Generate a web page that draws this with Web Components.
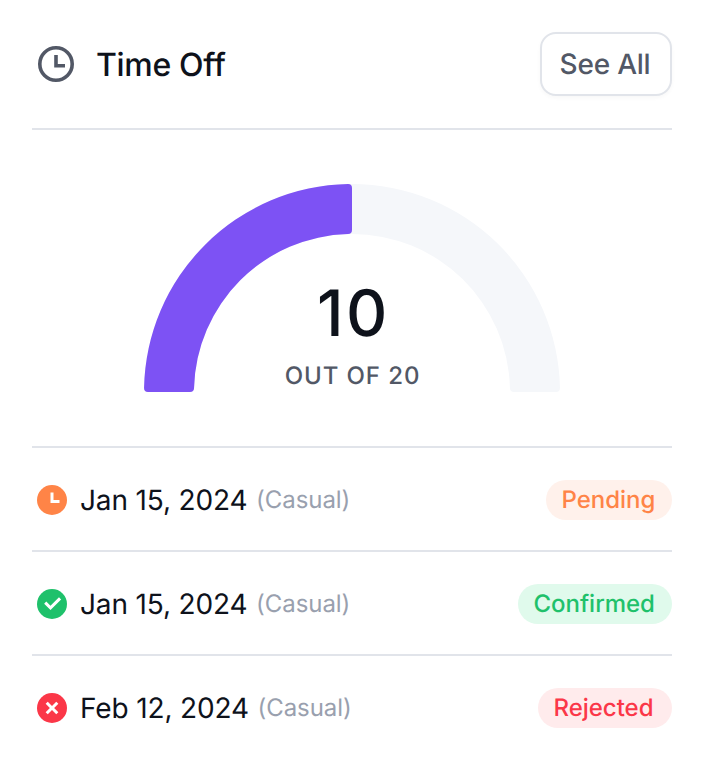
<!DOCTYPE html>
<html lang="en">
<head>
<meta charset="utf-8">
<title>Time Off</title>
<style>
  body { margin: 0; background: #fff; font-family: Inter, "Liberation Sans", sans-serif; text-rendering: geometricPrecision; }
</style>
</head>
<body>
<time-off-card>
  <outline-button slot="action">See All</outline-button>
  <half-gauge slot="gauge" value="10" total="20"></half-gauge>
  <leave-row status="pending" kind="(Casual)" label="Pending">Jan 15, 2024</leave-row>
  <leave-row status="confirmed" kind="(Casual)" label="Confirmed">Jan 15, 2024</leave-row>
  <leave-row status="rejected" kind="(Casual)" label="Rejected">Feb 12, 2024</leave-row>
</time-off-card>
<script>
const HANDS = 'M10.75 10H13.75V11.5H9.25V6.25H10.75Z';

const define = (name, render) => customElements.define(name, class extends HTMLElement {
  connectedCallback() {
    if (!this.shadowRoot) this.attachShadow({ mode: 'open' }).innerHTML = render(this);
  }
});

define('outline-button', () => `
  <style>
    :host { display: block; }
    button {
      display: block; box-sizing: border-box; height: 64px; width: 132px; padding: 0 2px 0 0;
      border: 2px solid #e1e4ea; border-radius: 16px; background: #fff;
      box-shadow: 0 2px 4px rgba(10, 13, 20, .03);
      font: 500 28px/40px Inter, "Liberation Sans", sans-serif; letter-spacing: -0.008em; color: #525866;
      text-rendering: geometricPrecision;
    }
  </style>
  <button type="button"><slot></slot></button>`);

// Ring segment between two fractions of the half circle, with softened corners.
function segment(from, to) {
  const cx = 208, cy = 208, R = 208, r = 158, c = 4;
  const a = Math.PI * (1 + from), b = Math.PI * (1 + to);
  const p = (rad, ang) => (cx + rad * Math.cos(ang)).toFixed(2) + ' ' + (cy + rad * Math.sin(ang)).toFixed(2);
  return `M${p(R - c, a)}Q${p(R, a)} ${p(R, a + c / R)}A${R} ${R} 0 0 1 ${p(R, b - c / R)}` +
    `Q${p(R, b)} ${p(R - c, b)}L${p(r + c, b)}Q${p(r, b)} ${p(r, b - c / r)}` +
    `A${r} ${r} 0 0 0 ${p(r, a + c / r)}Q${p(r, a)} ${p(r + c, a)}Z`;
}

define('half-gauge', el => {
  const value = el.getAttribute('value'), total = el.getAttribute('total');
  return `
  <style>
    :host { display: grid; width: 416px; height: 208px; }
    svg, .label { grid-area: 1 / 1; }
    .label { display: flex; flex-direction: column; align-items: center; align-self: end; }
    .value { padding-left: 3px; font-weight: 500; font-size: 64px; line-height: 80px; letter-spacing: 0.04em; color: #0e121b; }
    .total { margin-top: 6px; padding-left: 1px; font-weight: 500; font-size: 24px; line-height: 32px; letter-spacing: 0.038em; color: #525866; }
  </style>
  <svg width="416" height="208" viewBox="0 0 416 208">
    <path d="${segment(0, 1)}" fill="#f5f7fa"/>
    <path d="${segment(0, value / total)}" fill="#7d52f4"/>
  </svg>
  <div class="label"><div class="value">${value}</div><div class="total">OUT OF ${total}</div></div>`;
});

const STATUS = {
  pending: { color: '#ff8447', tint: '#fff1eb', width: 126, glyph: HANDS },
  confirmed: { color: '#1fc16b', tint: '#e0faec', width: 154, glyph: 'M9.252 13L14.555 7.697L13.494 6.636L9.252 10.879L7.13 8.757L6.07 9.818Z' },
  rejected: { color: '#fb3748', tint: '#ffebec', width: 134, glyph: 'M10 8.939L7.879 6.818L6.818 7.879L8.939 10L6.818 12.121L7.879 13.182L10 11.061L12.121 13.182L13.182 12.121L11.061 10L13.182 7.879L12.121 6.818Z' }
};

define('leave-row', el => {
  const s = STATUS[el.getAttribute('status')];
  return `
  <style>
    :host { display: flex; align-items: center; height: 40px; padding: 32px 0 30px; border-top: 2px solid #e1e4ea; }
    svg { flex: none; margin-right: 8px; }
    .date { font-size: 28px; line-height: 40px; letter-spacing: -0.005em; color: #0e121b; }
    .kind { margin-left: 8.5px; font-size: 24px; line-height: 32px; letter-spacing: -0.002em; color: #99a0ae; }
    .badge { box-sizing: border-box; width: ${s.width}px; margin-left: auto; padding-left: 15.5px; border-radius: 20px; font-weight: 500; font-size: 24px; line-height: 40px; letter-spacing: -0.001em; color: ${s.color}; background: ${s.tint}; }
  </style>
  <svg width="40" height="40" viewBox="0 0 20 20">
    <circle cx="10" cy="10" r="7.5" fill="${s.color}"/><path d="${s.glyph}" fill="#fff"/>
  </svg>
  <span class="date"><slot></slot></span>
  <span class="kind">${el.getAttribute('kind')}</span>
  <span class="badge">${el.getAttribute('label')}</span>`;
});

define('time-off-card', () => `
  <style>
    :host { display: block; box-sizing: border-box; width: 704px; height: 760px; padding: 32px; background: #fff; }
    header { display: flex; align-items: center; gap: 16px; height: 64px; padding-bottom: 32px; border-bottom: 2px solid #e1e4ea; }
    h2 { flex: 1; margin: 0; padding-top: 2px; font-weight: 500; font-size: 32px; line-height: 48px; letter-spacing: -0.01em; color: #0e121b; }
    .chart { display: flex; justify-content: center; padding: 54px 0; }
  </style>
  <header>
    <svg width="48" height="48" viewBox="0 0 20 20" fill="#525866">
      <circle cx="10" cy="10" r="6.75" fill="none" stroke="#525866" stroke-width="1.5"/><path d="${HANDS}"/>
    </svg>
    <h2>Time Off</h2>
    <slot name="action"></slot>
  </header>
  <div class="chart"><slot name="gauge"></slot></div>
  <slot></slot>`);
</script>
</body>
</html>
